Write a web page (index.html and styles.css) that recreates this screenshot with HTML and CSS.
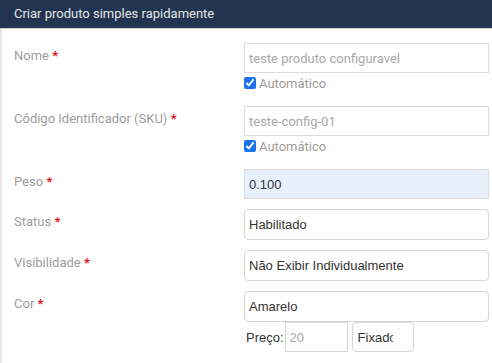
FILE: index.html
```html
<!DOCTYPE html>
<html lang="pt">
<head>
  <meta charset="UTF-8">
  <title>Criar produto simples rapidamente</title>
  <link rel="stylesheet" href="styles.css">
</head>
<body>

  <div class="panel">
    <div class="panel-title">Criar produto simples rapidamente</div>

    <div class="panel-body">
      <div class="field">
        <div class="field-label">Nome <span class="req">*</span></div>
        <div class="field-control">
          <input class="text-input" type="text" placeholder="teste produto configuravel">
          <label class="check"><input type="checkbox" checked> Automático</label>
        </div>
      </div>

      <div class="field">
        <div class="field-label">Código Identificador (SKU) <span class="req">*</span></div>
        <div class="field-control">
          <input class="text-input" type="text" placeholder="teste-config-01">
          <label class="check"><input type="checkbox" checked> Automático</label>
        </div>
      </div>

      <div class="field">
        <div class="field-label">Peso <span class="req">*</span></div>
        <div class="field-control">
          <input class="text-input filled" type="text" value="0.100">
        </div>
      </div>

      <div class="field">
        <div class="field-label">Status <span class="req">*</span></div>
        <div class="field-control">
          <select class="select">
            <option>Habilitado</option>
          </select>
        </div>
      </div>

      <div class="field">
        <div class="field-label">Visibilidade <span class="req">*</span></div>
        <div class="field-control">
          <select class="select">
            <option>Não Exibir Individualmente</option>
          </select>
        </div>
      </div>

      <div class="field">
        <div class="field-label">Cor <span class="req">*</span></div>
        <div class="field-control">
          <select class="select">
            <option>Amarelo</option>
          </select>
          <div class="price-row">
            <span class="price-label">Preço:</span>
            <input class="price-input" type="text" placeholder="20">
            <select class="select small">
              <option>Fixado</option>
            </select>
          </div>
        </div>
      </div>

      <div class="field">
        <div class="field-label"></div>
        <div class="field-control">
          <select class="select">
            <option></option>
          </select>
        </div>
      </div>
    </div>
  </div>

</body>
</html>
```

FILE: styles.css
```css
* {
  margin: 0;
  padding: 0;
  box-sizing: border-box;
}

body {
  background: #fff;
  font-family: Roboto, "Liberation Sans", Arial, sans-serif;
  font-size: 13px;
  overflow: hidden;
}

.panel-title {
  height: 29px;
  line-height: 28px;
  padding-left: 14px;
  background: #22344f;
  color: #e3e6ea;
  border-bottom: 1px solid #d2d2d2;
}

.panel-body {
  border-left: 2px solid #e8e8e8;
  padding: 14px 3px 0 12px;
  min-height: 340px;
}

.field {
  display: grid;
  grid-template-columns: 230px 1fr;
  margin-bottom: 10px;
}

.field-label {
  padding-top: 3px;
  line-height: 20px;
  color: #9d9d9d;
}

.req {
  color: #e0101e;
  font-weight: bold;
}

.text-input {
  display: block;
  width: 100%;
  height: 30px;
  padding: 0 4px;
  border: 1px solid #dcdcdc;
  border-radius: 0;
  font-family: Roboto, sans-serif;
  font-size: 13px;
  color: #333;
  outline: none;
}

.text-input::placeholder {
  color: #a8a8a8;
}

.text-input.filled {
  background: #e8f0fe;
  font-family: "Liberation Sans", Arial, sans-serif;
  color: #333;
}

.check {
  display: flex;
  align-items: center;
  height: 18px;
  margin: 1px 0 4px;
  color: #9d9d9d;
}

.check input {
  width: 12px;
  height: 12px;
  margin: 0 3px 0 0;
  accent-color: #1a73e8;
}

.select {
  display: block;
  width: 100%;
  height: 31px;
  padding: 0 4px;
  border: 1px solid #d6d6d6;
  border-radius: 4px;
  background: #fff;
  font-family: "Liberation Sans", Arial, sans-serif;
  font-size: 13px;
  color: #333;
  appearance: none;
  -webkit-appearance: none;
  outline: none;
}

.price-row {
  display: flex;
  align-items: center;
  height: 30px;
  margin-bottom: 10px;
}

.price-label {
  margin: 0 1px 0 2px;
  font-family: "Liberation Sans", Arial, sans-serif;
  color: #333;
}

.price-input {
  width: 63px;
  height: 30px;
  padding: 0 4px;
  border: 1px solid #d6d6d6;
  font-family: "Liberation Sans", Arial, sans-serif;
  font-size: 13px;
  outline: none;
}

.price-input::placeholder {
  color: #a8a8a8;
}

.select.small {
  width: 62px;
  height: 30px;
  margin-left: 4px;
  padding: 0 20px 0 5px;
}
```
